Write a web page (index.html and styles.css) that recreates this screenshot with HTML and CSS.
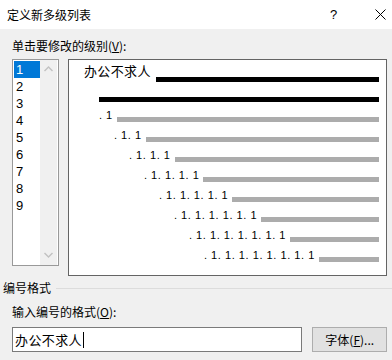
FILE: index.html
```html
<!DOCTYPE html>
<html>
<head>
  <title>定义新多级列表</title>
  <link rel="stylesheet" href="styles.css">
</head>
<body>
  <div class="titlebar">
    <span class="title">定义新多级列表</span>
    <span class="help">?</span>
    <span class="close">
      <svg width="11" height="11" viewBox="0 0 11 11"><path d="M0.5 0.5 L10.5 10.5 M10.5 0.5 L0.5 10.5" stroke="#000" stroke-width="1" fill="none"/></svg>
    </span>
  </div>

  <div class="main">
    <div class="label">单击要修改的级别(<u>V</u>):</div>
    <div class="levels">
      <div class="listbox">
        <ul class="items">
          <li class="selected">1</li>
          <li>2</li>
          <li>3</li>
          <li>4</li>
          <li>5</li>
          <li>6</li>
          <li>7</li>
          <li>8</li>
          <li>9</li>
        </ul>
        <div class="scrollbar">
          <svg class="arrow" width="9" height="6" viewBox="0 0 9 6"><path d="M0.5 5 L4.5 1 L8.5 5" stroke="#c2c2c2" stroke-width="1.4" fill="none"/></svg>
          <svg class="arrow" width="9" height="6" viewBox="0 0 9 6"><path d="M0.5 1 L4.5 5 L8.5 1" stroke="#c2c2c2" stroke-width="1.4" fill="none"/></svg>
        </div>
      </div>

      <!-- preview of all nine levels -->
      <div class="preview">
        <div class="row first"><span class="sample">办公不求人</span><span class="bar black"></span></div>
        <div class="row second"><span class="bar black"></span></div>
        <div class="row" style="--lvl: 0"><span class="num">. 1</span><span class="bar"></span></div>
        <div class="row" style="--lvl: 1"><span class="num">. 1. 1</span><span class="bar"></span></div>
        <div class="row" style="--lvl: 2"><span class="num">. 1. 1. 1</span><span class="bar"></span></div>
        <div class="row" style="--lvl: 3"><span class="num">. 1. 1. 1. 1</span><span class="bar"></span></div>
        <div class="row" style="--lvl: 4"><span class="num">. 1. 1. 1. 1. 1</span><span class="bar"></span></div>
        <div class="row" style="--lvl: 5"><span class="num">. 1. 1. 1. 1. 1. 1</span><span class="bar"></span></div>
        <div class="row" style="--lvl: 6"><span class="num">. 1. 1. 1. 1. 1. 1. 1</span><span class="bar"></span></div>
        <div class="row" style="--lvl: 7"><span class="num">. 1. 1. 1. 1. 1. 1. 1. 1</span><span class="bar"></span></div>
      </div>
    </div>
  </div>

  <div class="group-head">
    <span>编号格式</span>
    <span class="rule"></span>
  </div>

  <div class="format">
    <div class="label">输入编号的格式(<u>O</u>):</div>
    <div class="format-row">
      <div class="input"><span class="value">办公不求人</span><span class="caret"></span></div>
      <button class="btn">字体(<u>F</u>)...</button>
    </div>
  </div>
</body>
</html>
```

FILE: styles.css
```css
/* Dialog: Define new multilevel list */
body {
  margin: 0;
  background-color: #f0f0f0;
  font-family: "Noto Sans CJK SC", sans-serif;
  font-size: 12px;
  color: #000;
}

.titlebar {
  display: flex;
  align-items: center;
  height: 29px;
  background-color: #fff;
  padding-left: 7px;
}

.title {
  flex: 1;
  line-height: 16px;
}

.help {
  font-family: "Liberation Sans", sans-serif;
  font-size: 13px;
  width: 45px;
}

.close {
  display: flex;
  width: 17px;
  padding-bottom: 1px;
}

.main {
  padding: 0 5px 0 12px;
}

.label {
  line-height: 18px;
  height: 18px;
}

.main .label {
  margin-top: 8px;
  margin-bottom: 4px;
}

.levels {
  display: flex;
  gap: 9px;
  align-items: flex-start;
}

.listbox {
  display: flex;
  width: 47px;
  height: 207px;
  box-sizing: border-box;
  border: 1px solid #999;
  background-color: #fff;
}

.items {
  list-style: none;
  margin: 0;
  padding: 1px 0 0 1px;
  width: 27px;
  box-sizing: border-box;
  font-family: "Liberation Sans", sans-serif;
  font-size: 13px;
}

.items li {
  height: 17px;
  line-height: 17px;
  padding-left: 2px;
}

.items li.selected {
  background-color: #0078d7;
  color: #fff;
}

.scrollbar {
  width: 17px;
  background-color: #f0f0f0;
  display: flex;
  flex-direction: column;
  justify-content: space-between;
  align-items: center;
  padding: 6px 0 7px;
  box-sizing: border-box;
}

.arrow {
  display: block;
}

.preview {
  width: 320px;
  height: 217px;
  box-sizing: border-box;
  border: 1px solid #646464;
  background-color: #fff;
  padding: 2px 7px 0 0;
}

.row {
  display: flex;
  align-items: flex-end;
  height: 20px;
  padding-left: calc(30px + var(--lvl) * 15px);
}

.row.first {
  padding-left: 15px;
}

.row.second {
  padding-left: 30px;
}

.sample {
  font-size: 13px;
  letter-spacing: 0.4px;
  line-height: 16px;
  margin-bottom: 3px;
  margin-right: 5px;
  white-space: nowrap;
}

.num {
  font-family: "Liberation Sans", sans-serif;
  font-size: 11px;
  letter-spacing: 0.55px;
  line-height: 14px;
  margin-right: 4px;
  white-space: pre;
}

.bar {
  flex: 1;
  height: 5px;
  background-color: #acacac;
}

.bar.black {
  background-color: #000;
}

.group-head {
  display: flex;
  align-items: center;
  height: 18px;
  margin-top: 3px;
  padding-left: 3px;
  line-height: 18px;
}

.rule {
  flex: 1;
  height: 1px;
  background-color: #dcdcdc;
  margin-left: 5px;
}

.format {
  padding: 6px 5px 0 12px;
}

.format-row {
  display: flex;
  gap: 10px;
  margin-top: 6px;
}

.input {
  display: flex;
  align-items: center;
  width: 292px;
  height: 25px;
  box-sizing: border-box;
  border: 1px solid #7a7a7a;
  background-color: #fff;
  padding-left: 2px;
}

.value {
  font-size: 13px;
  letter-spacing: 0.4px;
  line-height: 16px;
}

.caret {
  width: 1px;
  height: 16px;
  background-color: #000;
  margin-left: 1px;
}

.btn {
  width: 75px;
  height: 25px;
  border: 1px solid #adadad;
  background-color: #e1e1e1;
  font-family: "Noto Sans CJK SC", sans-serif;
  font-size: 12px;
  padding: 0;
  color: #000;
}
```
